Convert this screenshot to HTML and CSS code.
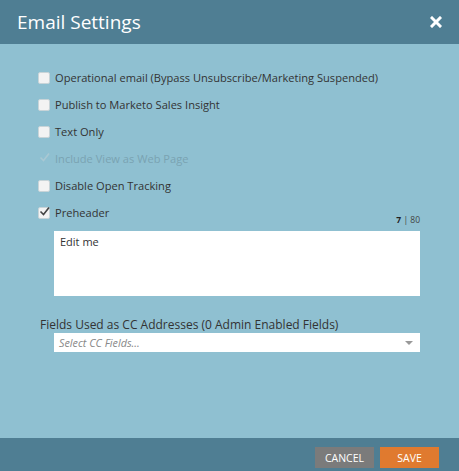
FILE: index.html
```html
<!DOCTYPE html>
<html>
<head>
<meta charset="utf-8">
<link rel="stylesheet" href="styles.css">
</head>
<body>
<div class="dialog">
  <div class="header">
    <div class="title">Email Settings</div>
    <div class="close"><svg width="12" height="12" viewBox="0 0 12 12"><path d="M2 2 L10 10 M10 2 L2 10" stroke="#fff" stroke-width="3" stroke-linecap="square"/></svg></div>
  </div>
  <div class="body">
    <div class="row"><span class="cb"></span><span>Operational email (Bypass Unsubscribe/Marketing Suspended)</span></div>
    <div class="row"><span class="cb"></span><span>Publish to Marketo Sales Insight</span></div>
    <div class="row"><span class="cb"></span><span>Text Only</span></div>
    <div class="row disabled"><span class="cb checked"><svg width="11" height="11" viewBox="0 0 11 11"><path d="M1.5 5.5 L4.5 8.5 L10 1.5" fill="none" stroke="currentColor" stroke-width="1.6"/></svg></span><span>Include View as Web Page</span></div>
    <div class="row"><span class="cb"></span><span>Disable Open Tracking</span></div>
    <div class="row"><span class="cb checked"><svg width="11" height="11" viewBox="0 0 11 11"><path d="M1.5 5.5 L4.5 8.5 L10 1.5" fill="none" stroke="currentColor" stroke-width="1.6"/></svg></span><span>Preheader</span></div>
    <div class="pre">
      <div class="counter"><b>7</b> | 80</div>
      <div class="textarea">Edit me</div>
    </div>
    <div class="cc-label">Fields Used as CC Addresses (0 Admin Enabled Fields)</div>
    <div class="select"><span>Select CC Fields...</span><span class="arrow"></span></div>
  </div>
  <div class="footer">
    <button class="btn cancel">CANCEL</button>
    <button class="btn save">SAVE</button>
  </div>
</div>
</body>
</html>
```

FILE: styles.css
```css
html, body { margin: 0; padding: 0; }
body { font-family: "Open Sans", "Liberation Sans", sans-serif; }
.dialog { width: 459px; height: 471px; display: flex; flex-direction: column; background: #8fc0d1; overflow: hidden; }
.header { height: 44px; background: #4f7e93; display: flex; align-items: center; justify-content: space-between; padding: 0 17px 0 17px; flex-shrink: 0; box-sizing: border-box; }
.title { color: #fff; font-size: 19px; line-height: 24px; }
.close { display: flex; align-items: center; }
.body { flex: 1; min-height: 0; padding: 20px 0 0 38px; color: #333; font-size: 11.1px; }
.row { display: flex; align-items: center; height: 27px; }
.row .cb { width: 10px; height: 10px; background: #f3f3f3; border: 1px solid #c8d4d8; border-radius: 2px; margin-right: 5px; position: relative; box-sizing: content-box; }
.row .cb.checked svg { position: absolute; left: 0; top: -2px; color: #444; }
.row.disabled { color: #7aa3b2; }
.row.disabled .cb { background: transparent; border-color: transparent; }
.row.disabled .cb svg { color: #a9c8d3; }
.pre { margin-left: 16px; width: 366px; }
.counter { text-align: right; font-size: 8.5px; color: #444; height: 10px; line-height: 10px; margin-top: -11px; }
.counter b { color: #222; }
.textarea { background: #fff; height: 65px; padding: 3px 6px; box-sizing: border-box; font-size: 11px; color: #333; margin-top: 6px; }
.cc-label { margin-top: 21px; margin-left: 2px; font-size: 12px; line-height: 16px; color: #333; }
.select { margin-left: 16px; width: 366px; height: 19px; background: #fff; display: flex; align-items: center; justify-content: space-between; padding: 0 7px 0 5px; box-sizing: border-box; margin-top: 0; }
.select span:first-child { font-style: italic; color: #888; font-size: 10.8px; }
.arrow { width: 0; height: 0; border-left: 4px solid transparent; border-right: 4px solid transparent; border-top: 4px solid #999; }
.footer { height: 33px; background: #4f7e93; display: flex; justify-content: flex-end; align-items: flex-end; padding: 0 20px 3px 0; gap: 6px; flex-shrink: 0; box-sizing: border-box; }
.btn { border: 0; height: 21px; width: 59px; color: #fff; font-family: "Open Sans", "Liberation Sans", sans-serif; font-size: 10.5px; padding: 0; }
.cancel { background: #7b7b7b; }
.save { background: #e07a2f; }
```
